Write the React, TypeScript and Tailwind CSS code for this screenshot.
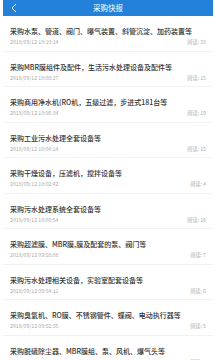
import React from "react";

const items = [
  ["采购水泵、管道、阀门、曝气装置、斜管沉淀、加药装置等", "2018/09/12 10:10:14", "33"],
  ["采购MBR膜组件及配件，生活污水处理设备及配件等", "2018/09/12 10:08:27", "15"],
  ["采购商用净水机(RO机，五级过滤，步进式181台等", "2018/09/12 10:06:34", "19"],
  ["采购工业污水处理全套设备等", "2018/09/12 10:04:14", "15"],
  ["采购干燥设备，压滤机，搅拌设备等", "2018/09/12 10:02:42", "4"],
  ["采购污水处理系统全套设备等", "2018/09/12 10:00:54", "16"],
  ["采购超滤膜、MBR膜,膜及配套的泵、阀门等", "2018/09/12 09:58:08", "7"],
  ["采购污水处理相关设备，实验室配套设备等", "2018/09/12 09:54:11", "6"],
  ["采购臭氧机、RO膜、不锈钢管件、蝶阀、电动执行器等", "2018/09/12 09:52:35", "5"],
  ["采购脱硫除尘器、MBR膜组、泵、风机、爆气头等", "2018/09/12 09:50:20", "8"],
];

export default function App() {
  return (
    <div
      className="w-[216px] h-[360px] overflow-hidden bg-white px-[3px]"
      style={{ fontFamily: '"Noto Sans CJK SC", "Noto Sans", sans-serif' }}
    >
      <div className="relative h-[16px] bg-[#2481da] flex items-center justify-center">
        <svg
          className="absolute left-[7px] top-[3px]"
          width="8"
          height="10"
          viewBox="0 0 8 10"
          fill="none"
          stroke="white"
          strokeWidth="1"
        >
          <path d="M6 1 L2 5 L6 9" />
        </svg>
        <span className="text-white text-[7.5px] leading-none">采购快报</span>
      </div>
      <div className="flex flex-col">
        {items.map(([t, d, n], i) => (
          <div
            key={i}
            className="h-[35.5px] shrink-0 border-b border-[#f2f2f2] px-[7px] pt-[10px] flex flex-col"
          >
            <div className="text-[7px] leading-[10px] font-medium text-[#333] whitespace-nowrap">
              {t}
            </div>
            <div className="mt-[3px] flex justify-between text-[5.2px] leading-[6px] text-[#aaa]">
              <span>{d}</span>
              <span>阅读: {n}</span>
            </div>
          </div>
        ))}
      </div>
    </div>
  );
}
